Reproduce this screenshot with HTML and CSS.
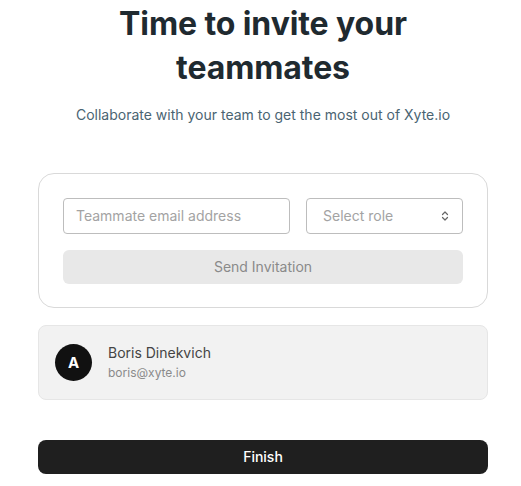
FILE: index.html
```html
<!DOCTYPE html>
<html>
<head>
<meta charset="utf-8">
<link rel="stylesheet" href="styles.css">
</head>
<body>
<main class="page">
  <h1 class="title">Time to invite your<br>teammates</h1>
  <p class="subtitle">Collaborate with your team to get the most out of Xyte.io</p>
  <section class="card">
    <div class="fields">
      <div class="input">Teammate email address</div>
      <div class="select">
        <span>Select role</span>
        <svg class="chev" width="8" height="12" viewBox="0 0 8 12" fill="none" stroke="#666" stroke-width="1.2" stroke-linecap="round" stroke-linejoin="round"><path d="M1.5 4.5 4 2l2.5 2.5M1.5 7.5 4 10l2.5-2.5"/></svg>
      </div>
    </div>
    <div class="send">Send Invitation</div>
  </section>
  <section class="member">
    <div class="avatar">A</div>
    <div class="info">
      <div class="name">Boris Dinekvich</div>
      <div class="email">boris@xyte.io</div>
    </div>
  </section>
  <div class="finish">Finish</div>
</main>
</body>
</html>
```
FILE: styles.css
```css
* { box-sizing: border-box; }
html, body { margin: 0; background: #fff; }
body { font-family: Inter, "Noto Sans", sans-serif; }
.page {
  width: 450px;
  margin: 0 0 0 38px;
  padding-top: 2px;
  display: flex;
  flex-direction: column;
}
.title {
  margin: 0;
  font-size: 32px;
  line-height: 44px;
  font-weight: 700;
  color: #1f2a30;
  text-align: center;
  letter-spacing: -0.1px;
}
.subtitle {
  margin: 15px 0 0;
  font-size: 14px;
  line-height: 20px;
  color: #4a6472;
  text-align: center;
}
.card {
  margin-top: 48px;
  border: 1px solid #d9d9d9;
  border-radius: 16px;
  padding: 24px 24px 23px;
  display: flex;
  flex-direction: column;
  gap: 16px;
}
.fields {
  display: flex;
  gap: 16px;
}
.input, .select {
  height: 36px;
  border: 1px solid #bdbdbd;
  border-radius: 4px;
  font-size: 14px;
  color: #a3a3a3;
  display: flex;
  align-items: center;
  padding-bottom: 1px;
}
.input { width: 227px; padding-left: 12px; }
.select {
  flex: 1;
  padding: 0 13px 1px 16px;
  justify-content: space-between;
}
.send {
  height: 34px;
  border-radius: 6px;
  background: #e8e8e8;
  color: #8a8a8a;
  font-size: 14px;
  display: flex;
  align-items: center;
  justify-content: center;
  padding-bottom: 1px;
}
.member {
  margin-top: 17px;
  height: 75px;
  background: #f2f2f2;
  border: 1px solid #e6e6e6;
  border-radius: 8px;
  display: flex;
  align-items: center;
  padding-left: 16px;
  gap: 16px;
}
.avatar {
  width: 37px;
  height: 37px;
  border-radius: 50%;
  background: #111;
  color: #fff;
  font-weight: 700;
  font-size: 15px;
  display: flex;
  align-items: center;
  justify-content: center;
}
.info { display: flex; flex-direction: column; gap: 3px; margin-top: -1px; }
.name { font-size: 14px; line-height: 18px; color: #444; }
.email { font-size: 12px; line-height: 16px; color: #8a8a8a; }
.finish {
  margin-top: 40px;
  height: 34px;
  background: #1f1f1f;
  border-radius: 8px;
  color: #fff;
  font-size: 14px;
  font-weight: 500;
  display: flex;
  align-items: center;
  justify-content: center;
  padding-bottom: 1px;
}
```
